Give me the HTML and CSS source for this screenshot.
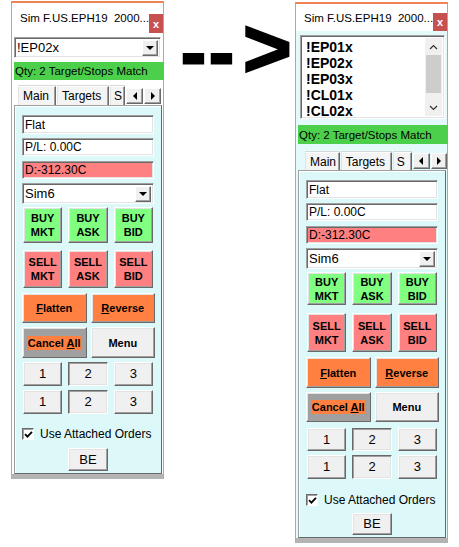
FILE: index.html
```html
<!DOCTYPE html>
<html lang="en">
<head>
    <meta charset="UTF-8">
    <title>Order entry panel</title>
    <link rel="stylesheet" href="styles.css">
</head>
<body>
    <div class="shot">
        <!-- symbol picked from a drop-down -->
        <div class="win win-a">
            <div class="titlebar"><span class="caption">Sim F.US.EPH19  2000...</span><span class="close">x</span></div>
            <div class="combo symbol"><span class="combo-text">!EP02x</span><span class="drop"></span></div>
            <div class="qty">Qty: 2 Target/Stops Match</div>
            <div class="tabs">
                <span class="tab">Main</span><span class="tab">Targets</span><span class="tab cut">S</span>
                <span class="tab-btn"><span class="tri-left"></span></span><span class="tab-btn"><span class="tri-right"></span></span>
            </div>
            <div class="page">
                <div class="field">Flat</div>
                <div class="field">P/L: 0.00C</div>
                <div class="field loss">D:-312.30C</div>
                <div class="combo account"><span class="combo-text">Sim6</span><span class="drop"></span></div>
                <div class="orders">
                    <div class="btn buy">BUY<br>MKT</div>
                    <div class="btn buy">BUY<br>ASK</div>
                    <div class="btn buy">BUY<br>BID</div>
                    <div class="btn sell">SELL<br>MKT</div>
                    <div class="btn sell">SELL<br>ASK</div>
                    <div class="btn sell">SELL<br>BID</div>
                </div>
                <div class="actions">
                    <div class="btn hot"><u>F</u>latten</div>
                    <div class="btn hot"><u>R</u>everse</div>
                    <div class="btn cancel"><span class="mark">Cancel <u>A</u>ll</span></div>
                    <div class="btn">Menu</div>
                </div>
                <div class="sizes">
                    <div class="btn num">1</div><div class="btn num down">2</div><div class="btn num">3</div>
                    <div class="btn num">1</div><div class="btn num down">2</div><div class="btn num">3</div>
                </div>
                <label class="check">
                    <span class="box"><svg width="9" height="9" viewBox="0 0 9 9"><path d="M1 4.2 L3.4 6.6 L8 1.8" fill="none" stroke="#000" stroke-width="1.8"/></svg></span>
                    Use Attached Orders
                </label>
                <div class="btn num be">BE</div>
            </div>
        </div>

        <div class="arrow"><span class="dash">--</span><span class="gt">&gt;</span></div>

        <!-- symbol picked from a list -->
        <div class="win win-b">
            <div class="titlebar"><span class="caption">Sim F.US.EPH19  2000...</span><span class="close">x</span></div>
            <div class="listbox">
                <div class="items">
                    <div>!EP01x</div>
                    <div>!EP02x</div>
                    <div>!EP03x</div>
                    <div>!CL01x</div>
                    <div>!CL02x</div>
                </div>
                <div class="scroll">
                    <span class="scroll-btn"><svg width="9" height="6" viewBox="0 0 9 6"><path d="M1 5 L4.5 1.5 L8 5" fill="none" stroke="#333" stroke-width="1.2"/></svg></span>
                    <span class="thumb"></span>
                    <span class="track"></span>
                    <span class="scroll-btn"><svg width="9" height="6" viewBox="0 0 9 6"><path d="M1 1 L4.5 4.5 L8 1" fill="none" stroke="#333" stroke-width="1.2"/></svg></span>
                </div>
            </div>
            <div class="qty">Qty: 2 Target/Stops Match</div>
            <div class="tabs">
                <span class="tab">Main</span><span class="tab">Targets</span><span class="tab cut">S</span>
                <span class="tab-btn"><span class="tri-left"></span></span><span class="tab-btn"><span class="tri-right"></span></span>
            </div>
            <div class="page">
                <div class="field">Flat</div>
                <div class="field">P/L: 0.00C</div>
                <div class="field loss">D:-312.30C</div>
                <div class="combo account"><span class="combo-text">Sim6</span><span class="drop"></span></div>
                <div class="orders">
                    <div class="btn buy">BUY<br>MKT</div>
                    <div class="btn buy">BUY<br>ASK</div>
                    <div class="btn buy">BUY<br>BID</div>
                    <div class="btn sell">SELL<br>MKT</div>
                    <div class="btn sell">SELL<br>ASK</div>
                    <div class="btn sell">SELL<br>BID</div>
                </div>
                <div class="actions">
                    <div class="btn hot"><u>F</u>latten</div>
                    <div class="btn hot"><u>R</u>everse</div>
                    <div class="btn cancel"><span class="mark">Cancel <u>A</u>ll</span></div>
                    <div class="btn">Menu</div>
                </div>
                <div class="sizes">
                    <div class="btn num">1</div><div class="btn num down">2</div><div class="btn num">3</div>
                    <div class="btn num">1</div><div class="btn num down">2</div><div class="btn num">3</div>
                </div>
                <label class="check">
                    <span class="box"><svg width="9" height="9" viewBox="0 0 9 9"><path d="M1 4.2 L3.4 6.6 L8 1.8" fill="none" stroke="#000" stroke-width="1.8"/></svg></span>
                    Use Attached Orders
                </label>
                <div class="btn num be">BE</div>
            </div>
        </div>
    </div>
</body>
</html>
```

FILE: styles.css
```css
body {
    margin: 0;
    background: #fff;
    color: #000;
    font-family: "Liberation Sans", Arial, sans-serif;
}

.shot {
    display: flex;
    align-items: flex-start;
    padding: 1px 0 0 11px;
}

/* window frame */
.win {
    width: 153px;
    box-sizing: border-box;
    border: 1px solid #a9a9a9;
    border-top: 2px solid #ee8454;
    border-bottom: 5px solid #b4b4b4;
    background: #fff;
}

.win-b {
    margin-top: 1px;
    background: #e4f9f9;
}

.titlebar {
    display: flex;
    align-items: center;
    height: 30px;
    padding-left: 8px;
    background: #fff;
    font-size: 11.5px;
    white-space: pre;
}

.close {
    margin-left: auto;
    align-self: flex-end;
    width: 19px;
    height: 19px;
    display: flex;
    align-items: center;
    justify-content: center;
    background: #c75050;
    color: #fff;
    font-size: 11px;
    font-weight: bold;
}

.win-b .titlebar {
    height: 27px;
}

.win-b .close {
    height: 18px;
}

/* sunken boxes */
.combo, .field, .listbox {
    box-sizing: border-box;
    border: 1px solid;
    border-color: #a0a0a0 #fff #fff #a0a0a0;
    box-shadow: inset 1px 1px #696969, inset -1px -1px #e3e3e3;
    background: #fff;
}

.combo {
    display: flex;
    align-items: center;
    height: 21px;
    padding: 0 2px 0 2px;
    font-size: 13px;
}

.combo-text {
    flex: 1;
}

.drop {
    width: 16px;
    height: 16px;
    box-sizing: border-box;
    display: flex;
    align-items: center;
    justify-content: center;
    background: #f0f0f0;
    border: 1px solid;
    border-color: #fff #696969 #696969 #fff;
    box-shadow: inset -1px -1px #a0a0a0;
}

.drop::after {
    content: "";
    border-left: 4px solid transparent;
    border-right: 4px solid transparent;
    border-top: 4px solid #000;
}

.symbol {
    margin: 4px 2px 0 2px;
}

.qty {
    display: flex;
    align-items: center;
    height: 18px;
    margin: 4px -1px 0 2px;
    padding-left: 1px;
    background: #4cd04c;
    font-size: 11.5px;
}

.win-b .qty {
    height: 19px;
    margin-top: 6px;
}

/* symbol list */
.listbox {
    display: flex;
    height: 84px;
    margin: 4px 2px 0 4px;
    padding: 2px;
}

.items {
    flex: 1;
    padding: 1px 0 0 3px;
    font-size: 14px;
    font-weight: bold;
    line-height: 16px;
}

.scroll {
    width: 17px;
    display: flex;
    flex-direction: column;
    background: #f0f0f0;
}

.scroll-btn {
    height: 17px;
    display: flex;
    align-items: center;
    justify-content: center;
}

.thumb {
    height: 38px;
    margin: 0 1px;
    background: #cdcdcd;
}

.track {
    flex: 1;
}

/* tab strip */
.tabs {
    display: flex;
    align-items: center;
    height: 19px;
    margin-top: 6px;
    padding-left: 6px;
    font-size: 12px;
}

.tab {
    height: 19px;
    box-sizing: border-box;
    margin-right: 1px;
    padding: 2px 0 0 4px;
    border: 1px solid;
    border-bottom: none;
    border-color: #fff #696969 transparent #e3e3e3;
    box-shadow: inset -1px 0 #a0a0a0, 0 -1px #d8d8d8;
    background: #f4f4f4;
    white-space: nowrap;
}

.tab:nth-child(1) { width: 38px; }
.tab:nth-child(2) { width: 52px; }
.tab.cut { width: 15px; margin-right: 0; padding-left: 3px; }

.tab-btn {
    width: 17px;
    height: 16px;
    box-sizing: border-box;
    margin-left: 1px;
    display: flex;
    align-items: center;
    justify-content: center;
    background: #f0f0f0;
    border: 1px solid;
    border-color: #fff #696969 #696969 #fff;
    box-shadow: inset -1px -1px #a0a0a0;
}

.tri-left {
    border-top: 4px solid transparent;
    border-bottom: 4px solid transparent;
    border-right: 4px solid #000;
}

.tri-right {
    border-top: 4px solid transparent;
    border-bottom: 4px solid transparent;
    border-left: 4px solid #000;
}

.win-b .tabs {
    height: 18px;
    margin-top: 8px;
    padding-left: 9px;
}

.win-b .tab { height: 18px; }
.win-b .tab:nth-child(1) { width: 36px; }
.win-b .tab:nth-child(2) { width: 53px; }
.win-b .tab.cut { width: 20px; }

/* main tab page */
.page {
    width: 148px;
    box-sizing: border-box;
    margin-left: 2px;
    padding: 9px 7px 2px;
    display: flex;
    flex-direction: column;
    gap: 4px;
    border: 1px solid;
    border-color: #a0a0a0 #696969 #696969 #a0a0a0;
    box-shadow: inset 1px 1px #fff;
    background: #dcf8f8;
}

.field {
    height: 18px;
    display: flex;
    align-items: center;
    padding-left: 2px;
    font-size: 12px;
}

.field:first-child {
    height: 19px;
}

.field.loss {
    margin-top: 1px;
    background: #ff8080;
}

.orders, .sizes {
    display: grid;
    grid-template-columns: repeat(3, 1fr);
    column-gap: 6px;
    padding: 0 1px;
}

.orders {
    grid-template-rows: 36px 38px;
    row-gap: 7px;
    margin-top: -1px;
}

.actions {
    display: grid;
    grid-template-columns: 1fr 1fr;
    grid-template-rows: 30px 31px;
    gap: 4px;
    margin: 1px -1px 0 0;
}

.sizes {
    grid-template-rows: 24px 24px;
    row-gap: 4px;
}

.btn {
    box-sizing: border-box;
    display: flex;
    align-items: center;
    justify-content: center;
    text-align: center;
    border: 1px solid;
    border-color: #fff #696969 #696969 #fff;
    box-shadow: inset -1px -1px #a0a0a0, inset 1px 1px #e3e3e3;
    background: #f0f0f0;
    font-size: 11px;
    font-weight: bold;
    line-height: 14px;
}

.btn.buy { background: #80ff80; }
.btn.sell { background: #ff8080; }
.btn.hot { background: #ff8040; }
.btn.cancel { background: #a0a0a0; }

.mark {
    padding: 0 1px;
    background: #ff8040;
}

.btn.num {
    font-size: 13px;
    font-weight: normal;
}

.btn.down {
    border-color: #696969 #fff #fff #696969;
    box-shadow: inset 1px 1px #a0a0a0, inset -1px -1px #e3e3e3;
}

.check {
    display: flex;
    align-items: center;
    gap: 6px;
    align-self: flex-start;
    margin-top: 10px;
    height: 12px;
    font-size: 12px;
}

.box {
    width: 12px;
    height: 12px;
    box-sizing: border-box;
    display: flex;
    align-items: center;
    justify-content: center;
    border: 1px solid;
    border-color: #696969 #fff #fff #696969;
    box-shadow: inset 1px 1px #a0a0a0;
    background: #fff;
}

.btn.be {
    align-self: center;
    width: 40px;
    height: 23px;
    margin-top: 4px;
}

/* second window sits a bit tighter */
.win-b .orders {
    grid-template-rows: 33px 39px;
    row-gap: 8px;
}

.win-b .actions {
    grid-template-rows: 31px 30px;
}

.win-b .sizes {
    grid-template-rows: 23px 24px;
    row-gap: 4px;
    margin-top: 2px;
}

.win-b .check {
    margin-top: 11px;
}

.win-b .btn.be {
    height: 22px;
    margin-top: 3px;
}

/* the big arrow between the two shots */
.arrow {
    width: 131px;
    box-sizing: border-box;
    display: flex;
    align-items: center;
    padding: 5px 0 0 17px;
    font-weight: bold;
    line-height: 1;
}

.dash {
    margin-top: 8px;
    font-family: "DejaVu Sans", sans-serif;
    font-size: 60px;
    letter-spacing: 3px;
    -webkit-text-stroke: 3px #000;
}

.gt {
    margin: 0 0 6px 6px;
    font-family: "Liberation Sans", Arial, sans-serif;
    font-size: 84px;
    -webkit-text-stroke: 2px #000;
}
```
